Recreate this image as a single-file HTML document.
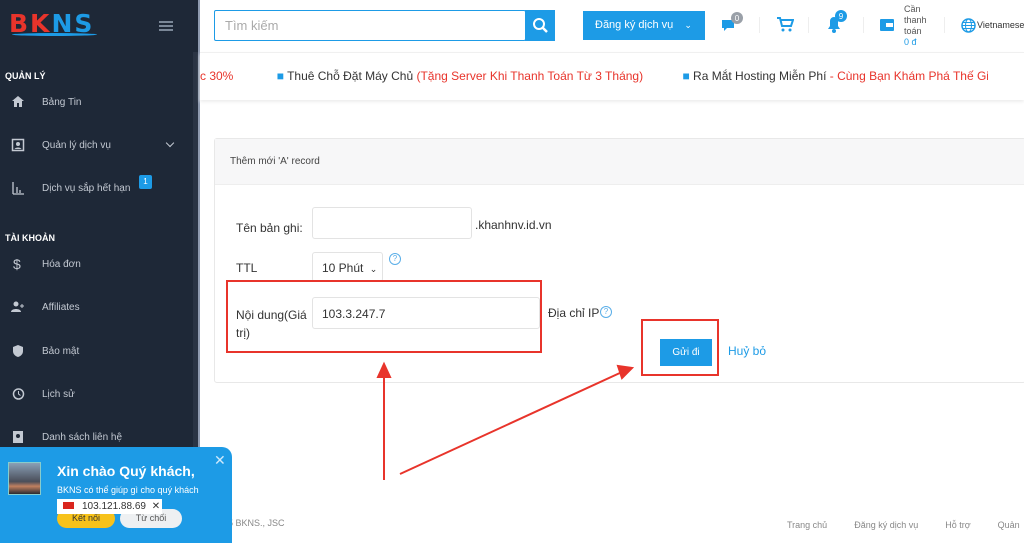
<!DOCTYPE html>
<html><head><meta charset="utf-8"><style>
*{margin:0;padding:0;box-sizing:border-box}
body{width:1024px;height:543px;overflow:hidden;font-family:"Liberation Sans",sans-serif;background:#fff;position:relative;font-size:12px;color:#333}
.abs{position:absolute;white-space:nowrap}
#side{left:0;top:0;width:198px;height:543px;background:#1e2837}
#side .sb{position:absolute;left:193px;top:52px;width:5px;height:491px;background:#2a3444}
.sec{position:absolute;left:5px;color:#fff;font-size:9px;font-weight:bold}
.it{position:absolute;left:42px;color:#c3c9d2;font-size:10px}
.ic{position:absolute;left:11px;width:14px;height:14px}
</style></head><body>
<div id="side" class="abs">
 <div class="sb"></div>
 <div class="abs" style="left:9px;top:9px;font-size:25px;font-weight:900;letter-spacing:2px;font-family:'DejaVu Sans',sans-serif"><span style="color:#e8342b">BK</span><span style="color:#1d9be6">NS</span></div>
 <div class="abs" style="left:12px;top:33px;width:85px;height:3px;border-radius:50%;background:#1d9be6"></div>
 <div class="abs" style="left:159px;top:21px;width:14px;height:2px;background:#7a8797;box-shadow:0 4px #7a8797,0 8px #7a8797"></div>
 <div class="sec" style="top:71px">QUẢN LÝ</div>
 <svg class="ic" style="top:94px" viewBox="0 0 14 14"><path d="M1 7L7 2l6 5h-2v6H8V9H6v4H3V7z" fill="#c3c9d2"/></svg><div class="it" style="top:97px">Bảng Tin</div>
 <svg class="ic" style="top:138px" viewBox="0 0 14 14"><rect x="1.5" y="1.5" width="11" height="11" fill="none" stroke="#c3c9d2" stroke-width="1.5"/><circle cx="7" cy="6" r="2" fill="#c3c9d2"/><path d="M3.5 11c1-2 6-2 7 0" fill="#c3c9d2"/></svg><div class="it" style="top:140px">Quản lý dịch vụ</div>
 <div class="abs" style="left:167px;top:140px;width:6px;height:6px;border-right:1.5px solid #c3c9d2;border-bottom:1.5px solid #c3c9d2;transform:rotate(45deg)"></div>
 <svg class="ic" style="top:181px" viewBox="0 0 14 14"><path d="M2 1v12M2 13h11M6 6v6M9 9v3" stroke="#c3c9d2" stroke-width="1.3"/></svg><div class="it" style="top:183px">Dịch vụ sắp hết hạn</div>
 <div class="abs" style="left:139px;top:175px;width:13px;height:14px;background:#1d9be6;border-radius:2px;color:#fff;font-size:8px;text-align:center;line-height:14px">1</div>
 <div class="sec" style="top:233px">TÀI KHOẢN</div>
 <div class="it" style="left:13px;top:256px;font-size:14px">$</div><div class="it" style="top:259px">Hóa đơn</div>
 <svg class="ic" style="top:300px" viewBox="0 0 14 14"><circle cx="5" cy="4" r="2.5" fill="#c3c9d2"/><path d="M0 12c0-4 10-4 10 0z" fill="#c3c9d2"/><path d="M11 4v4M9 6h4" stroke="#c3c9d2"/></svg><div class="it" style="top:302px">Affiliates</div>
 <svg class="ic" style="top:344px" viewBox="0 0 14 14"><path d="M7 1l5 2v4c0 3-2 5-5 6-3-1-5-3-5-6V3z" fill="#c3c9d2"/></svg><div class="it" style="top:346px">Bảo mật</div>
 <svg class="ic" style="top:387px" viewBox="0 0 14 14"><circle cx="7.5" cy="7" r="5" fill="none" stroke="#c3c9d2" stroke-width="1.5"/><path d="M7.5 4v3l2 1.5" stroke="#c3c9d2" fill="none"/></svg><div class="it" style="top:389px">Lịch sử</div>
 <svg class="ic" style="top:430px" viewBox="0 0 14 14"><rect x="2" y="1" width="10" height="12" fill="#c3c9d2"/><circle cx="7" cy="6" r="2" fill="#1e2837"/></svg><div class="it" style="top:432px">Danh sách liên hệ</div>
</div>
<div class="abs" style="left:198px;top:0;width:2px;height:543px;background:#8f9bb0"></div>
<!-- header -->
<div class="abs" style="left:200px;top:0;width:824px;height:50px;background:#fff"></div>
<div class="abs" style="left:214px;top:10px;width:312px;height:31px;border:1px solid #1d9be6;border-radius:2px;background:#fff;color:#aaa;font-size:13px;padding:7px 10px">Tìm kiếm</div>
<div class="abs" style="left:525px;top:10px;width:30px;height:31px;background:#1d9be6"><svg width="30" height="31" viewBox="0 0 30 31"><circle cx="14" cy="14" r="5" stroke="#fff" stroke-width="2" fill="none"/><path d="M18 18l4 4" stroke="#fff" stroke-width="2.5"/></svg></div>
<div class="abs" style="left:583px;top:11px;width:122px;height:29px;background:#1d9be6;color:#fff;font-size:11px;padding:8px 12px">Đăng ký dịch vụ <span style="margin-left:8px;font-size:9px">⌄</span></div>
<svg class="abs" style="left:720px;top:10px" width="26" height="26"><path d="M2 10h12v8H7l-3 3v-3H2z" fill="#1d9be6"/><circle cx="17" cy="8" r="6" fill="#9aa0a8"/><text x="17" y="11" font-size="8" fill="#fff" text-anchor="middle" font-family="Liberation Sans">0</text></svg>
<div class="abs" style="left:759px;top:17px;width:1px;height:16px;background:#eee"></div>
<svg class="abs" style="left:776px;top:16px" width="18" height="18" viewBox="0 0 18 18"><path d="M1 2h3l2 8h9l2-6H5" fill="none" stroke="#1d9be6" stroke-width="2"/><circle cx="7" cy="14" r="1.5" fill="#1d9be6"/><circle cx="14" cy="14" r="1.5" fill="#1d9be6"/></svg>
<div class="abs" style="left:808px;top:17px;width:1px;height:16px;background:#eee"></div>
<svg class="abs" style="left:825px;top:9px" width="26" height="26"><path d="M3 20h12l-2-3v-5a4 4 0 0 0-8 0v5z" fill="#1d9be6"/><circle cx="9" cy="22" r="2" fill="#1d9be6"/><circle cx="16" cy="7" r="6" fill="#1d9be6"/><text x="16" y="10" font-size="8" fill="#fff" text-anchor="middle" font-family="Liberation Sans">9</text></svg>
<div class="abs" style="left:863px;top:17px;width:1px;height:16px;background:#eee"></div>
<svg class="abs" style="left:879px;top:18px" width="16" height="14"><rect x="1" y="1" width="14" height="12" rx="1" fill="#1d9be6"/><rect x="7" y="5" width="7" height="4" fill="#fff"/></svg>
<div class="abs" style="left:904px;top:4px;font-size:9px;line-height:11px;color:#555">Cần<br>thanh<br>toán<br><span style="color:#1d9be6">0 đ</span></div>
<div class="abs" style="left:944px;top:17px;width:1px;height:16px;background:#eee"></div>
<svg class="abs" style="left:961px;top:18px" width="15" height="15"><circle cx="7.5" cy="7.5" r="6.5" fill="none" stroke="#1d9be6" stroke-width="1.5"/><ellipse cx="7.5" cy="7.5" rx="3" ry="6.5" fill="none" stroke="#1d9be6"/><path d="M1 7.5h13M2 4.5h11M2 10.5h11" stroke="#1d9be6"/></svg>
<div class="abs" style="left:977px;top:20px;font-size:9px;color:#333">Vietnamese</div>
<!-- ticker -->
<div class="abs" style="left:200px;top:52px;width:824px;height:48px;background:#fff;border-top:1px solid #f0f0f0;box-shadow:0 2px 3px #eee;font-size:12px;overflow:hidden">
 <div class="abs" style="left:0;top:16px;width:788px;overflow:hidden"><span style="color:#e8342b">c 30%</span>
 <span style="margin-left:40px;color:#1d9be6">■</span> Thuê Chỗ Đặt Máy Chủ <span style="color:#e8342b">(Tặng Server Khi Thanh Toán Từ 3 Tháng)</span>
 <span style="margin-left:36px;color:#1d9be6">■</span> Ra Mắt Hosting Miễn Phí <span style="color:#e8342b">- Cùng Bạn Khám Phá Thế Giới</span></div>
</div>
<!-- card -->
<div class="abs" style="left:214px;top:138px;width:812px;height:245px;background:#fff;border:1px solid #e8e8e8;border-radius:3px"></div>
<div class="abs" style="left:215px;top:139px;width:809px;height:46px;background:#f7f7f8;border-bottom:1px solid #eee;font-size:10px;color:#444;padding:17px 15px">Thêm mới 'A' record</div>
<div class="abs" style="left:236px;top:221px;font-size:12px">Tên bản ghi:</div>
<div class="abs" style="left:312px;top:207px;width:160px;height:32px;border:1px solid #e3e3e3;border-radius:3px"></div>
<div class="abs" style="left:475px;top:218px;font-size:12px">.khanhnv.id.vn</div>
<div class="abs" style="left:236px;top:261px;font-size:12px">TTL</div>
<div class="abs" style="left:312px;top:252px;width:71px;height:30px;border:1px solid #e3e3e3;border-radius:3px;font-size:12px;padding:8px 6px 8px 9px">10 Phút <span style="font-size:9px;margin-left:3px">⌄</span></div>
<div class="abs" style="left:389px;top:253px;width:12px;height:12px;border:1px solid #5aaee8;border-radius:50%;color:#5aaee8;font-size:8px;text-align:center;line-height:10px">?</div>
<div class="abs" style="left:236px;top:306px;font-size:12px;line-height:18px">Nội dung(Giá<br>trị)</div>
<div class="abs" style="left:312px;top:297px;width:228px;height:32px;border:1px solid #e3e3e3;border-radius:3px;font-size:12px;padding:9px 9px">103.3.247.7</div>
<div class="abs" style="left:226px;top:280px;width:316px;height:73px;border:2px solid #e8342b"></div>
<div class="abs" style="left:548px;top:306px;font-size:12px">Địa chỉ IP</div>
<div class="abs" style="left:600px;top:306px;width:12px;height:12px;border:1px solid #5aaee8;border-radius:50%;color:#5aaee8;font-size:8px;text-align:center;line-height:10px">?</div>
<div class="abs" style="left:641px;top:319px;width:78px;height:57px;border:2px solid #e8342b"></div>
<div class="abs" style="left:660px;top:339px;width:52px;height:27px;background:#1d9be6;color:#fff;font-size:10px;text-align:center;line-height:27px">Gửi đi</div>
<div class="abs" style="left:728px;top:344px;font-size:12px;color:#1d9be6">Huỷ bỏ</div>
<svg class="abs" style="left:0;top:0" width="1024" height="543"><g stroke="#e8342b" stroke-width="2" fill="#e8342b"><path d="M384 480V375" /><path d="M378 377l6-13 6 13z"/><path d="M400 474L622 372"/><path d="M618 366l14 2-10 10z"/></g></svg>
<!-- footer -->
<div class="abs" style="left:228px;top:518px;font-size:9px;color:#888">5 BKNS., JSC</div>
<div class="abs" style="left:787px;top:520px;font-size:9px;color:#888">Trang chủ<span style="margin-left:27px">Đăng ký dịch vụ</span><span style="margin-left:27px">Hỗ trợ</span><span style="margin-left:27px">Quản</span></div>
<!-- chat -->
<div class="abs" style="left:0;top:447px;width:232px;height:96px;background:#1d9be6;border-radius:0 10px 0 0"></div>
<div class="abs" style="left:214px;top:452px;color:#cfe9fb;font-size:14px">✕</div>
<div class="abs" style="left:8px;top:462px;width:33px;height:33px;border:1px solid #8cc;background:linear-gradient(#8aa0b6,#4a4e5a 60%,#c08060 75%,#2a2a30)"></div>
<div class="abs" style="left:57px;top:463px;color:#fff;font-size:14px;font-weight:bold">Xin chào Quý khách,</div>
<div class="abs" style="left:57px;top:485px;color:#fff;font-size:9px">BKNS có thể giúp gì cho quý khách</div>
<div class="abs" style="left:57px;top:509px;width:58px;height:19px;background:#f7c21a;border-radius:10px;font-size:9px;text-align:center;line-height:19px;color:#333">Kết nối</div>
<div class="abs" style="left:120px;top:509px;width:62px;height:19px;background:#eef0f2;border-radius:10px;font-size:9px;text-align:center;line-height:19px;color:#555">Từ chối</div>
<div class="abs" style="left:57px;top:499px;width:105px;height:15px;background:#fff;font-size:10px;line-height:15px;padding-left:6px;color:#333"><span style="display:inline-block;width:11px;height:7px;background:#da251d;margin-right:8px"></span>103.121.88.69 <span style="margin-left:3px">✕</span></div>
</body></html>
